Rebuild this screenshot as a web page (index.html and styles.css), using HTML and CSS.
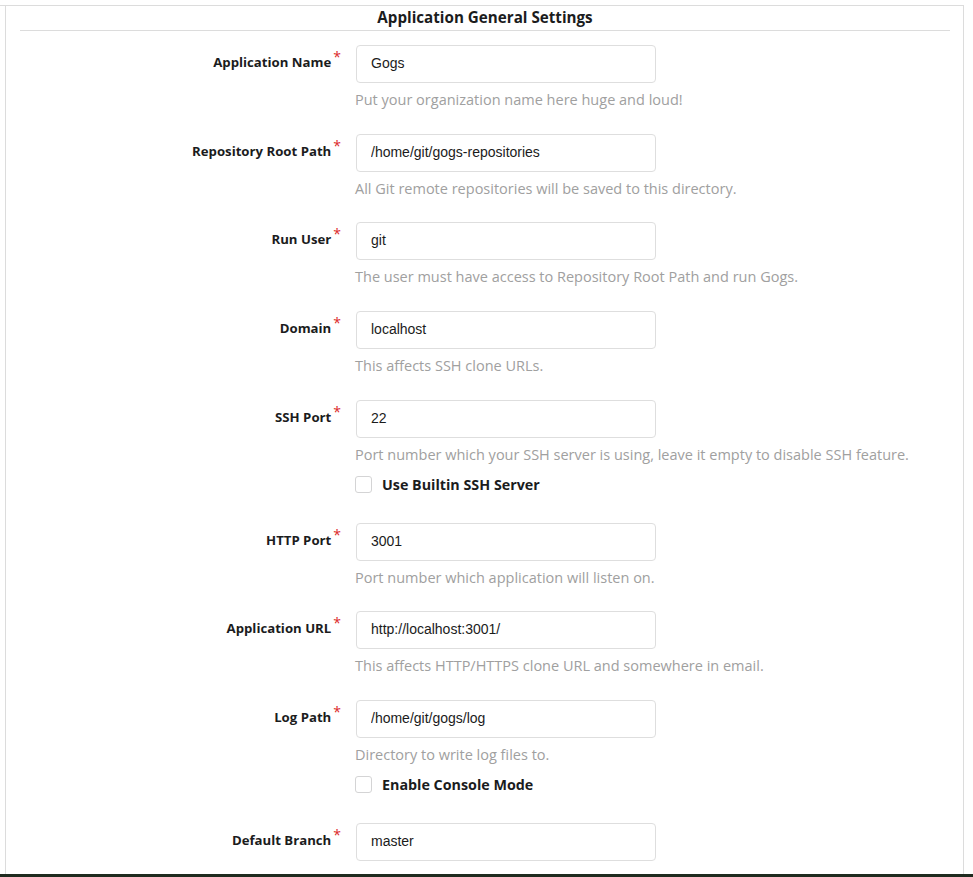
FILE: index.html
```html
<!DOCTYPE html>
<html>
<head>
<meta charset="utf-8">
<link rel="stylesheet" href="styles.css">
</head>
<body>
<div class="topline"></div>
<div class="segment">
  <h3 class="title">Application General Settings</h3>
  <div class="form">
    <div class="field">
      <label class="label req">Application Name</label>
      <div class="control">
        <input class="input" type="text" value="Gogs">
        <div class="help">Put your organization name here huge and loud!</div>
      </div>
    </div>
    <div class="field">
      <label class="label req">Repository Root Path</label>
      <div class="control">
        <input class="input" type="text" value="/home/git/gogs-repositories">
        <div class="help">All Git remote repositories will be saved to this directory.</div>
      </div>
    </div>
    <div class="field">
      <label class="label req">Run User</label>
      <div class="control">
        <input class="input" type="text" value="git">
        <div class="help">The user must have access to Repository Root Path and run Gogs.</div>
      </div>
    </div>
    <div class="field">
      <label class="label req">Domain</label>
      <div class="control">
        <input class="input" type="text" value="localhost">
        <div class="help">This affects SSH clone URLs.</div>
      </div>
    </div>
    <div class="field">
      <label class="label req">SSH Port</label>
      <div class="control">
        <input class="input" type="text" value="22">
        <div class="help">Port number which your SSH server is using, leave it empty to disable SSH feature.</div>
        <div class="check"><span class="box"></span><span class="check-label">Use Builtin SSH Server</span></div>
      </div>
    </div>
    <div class="field">
      <label class="label req">HTTP Port</label>
      <div class="control">
        <input class="input" type="text" value="3001">
        <div class="help">Port number which application will listen on.</div>
      </div>
    </div>
    <div class="field">
      <label class="label req">Application URL</label>
      <div class="control">
        <input class="input" type="text" value="http://localhost:3001/">
        <div class="help">This affects HTTP/HTTPS clone URL and somewhere in email.</div>
      </div>
    </div>
    <div class="field">
      <label class="label req">Log Path</label>
      <div class="control">
        <input class="input" type="text" value="/home/git/gogs/log">
        <div class="help">Directory to write log files to.</div>
        <div class="check"><span class="box"></span><span class="check-label">Enable Console Mode</span></div>
      </div>
    </div>
    <div class="field">
      <label class="label req">Default Branch</label>
      <div class="control">
        <input class="input" type="text" value="master">
      </div>
    </div>
  </div>
</div>
<div class="bottombar"></div>
</body>
</html>
```

FILE: styles.css
```css
html, body {
  margin: 0;
  padding: 0;
  background: #fff;
}
body {
  font-family: "Open Sans", "Noto Sans", sans-serif;
  color: #212121;
  overflow: hidden;
  height: 877px;
}
.topline {
  width: 964px;
  height: 6px;
  border-bottom: 1px solid #dcdcdc;
  box-sizing: border-box;
}
.segment {
  margin-left: 5px;
  width: 959px;
  box-sizing: border-box;
  border-left: 1px solid #dcdcdc;
  border-right: 1px solid #dcdcdc;
  padding: 0 13px 40px 14px;
}
.title {
  margin: 0;
  padding: 1px 0 3px;
  text-align: center;
  font-size: 15.2px;
  line-height: 20px;
  font-weight: 700;
  color: #1b1c1d;
  border-bottom: 1px solid #dcdcdc;
}
.form {
  padding-top: 14px;
}
.field {
  display: flex;
  align-items: flex-start;
  margin-bottom: 23.67px;
}
.label {
  width: 321px;
  flex: none;
  text-align: right;
  font-size: 13.2px;
  font-weight: 700;
  line-height: 34px;
  height: 38px;
  color: #1b1c1d;
}
.req::after {
  content: "*";
  color: #db2828;
  font-weight: 400;
  font-size: 14px;
  position: relative;
  top: -5px;
  margin-left: 2px;
}
.control {
  margin-left: 15px;
  display: flex;
  flex-direction: column;
  align-items: flex-start;
}
.input {
  box-sizing: border-box;
  width: 300px;
  height: 38px;
  border: 1px solid #dedede;
  border-radius: 4px;
  padding: 0 14px 2px;
  font-family: "Liberation Sans", Arial, sans-serif;
  font-size: 14px;
  color: #1b1b1b;
  outline: none;
  margin: 0;
}
.help {
  margin-top: 7px;
  margin-left: -1px;
  font-size: 14.5px;
  line-height: 20px;
  color: #a0a0a0;
  white-space: nowrap;
}
.check {
  display: flex;
  align-items: center;
  height: 24px;
  margin-top: 8px;
  margin-bottom: 2.33px;
}
.box {
  width: 17px;
  height: 17px;
  box-sizing: border-box;
  border: 1px solid #d4d4d5;
  border-radius: 3px;
  margin-left: -1px;
  margin-right: 10px;
}
.check-label {
  font-size: 14.3px;
  font-weight: 700;
  color: #1b1c1d;
}
.bottombar {
  position: fixed;
  left: 0;
  right: 0;
  bottom: 0;
  height: 3px;
  background: #1f2b1f;
}
```
